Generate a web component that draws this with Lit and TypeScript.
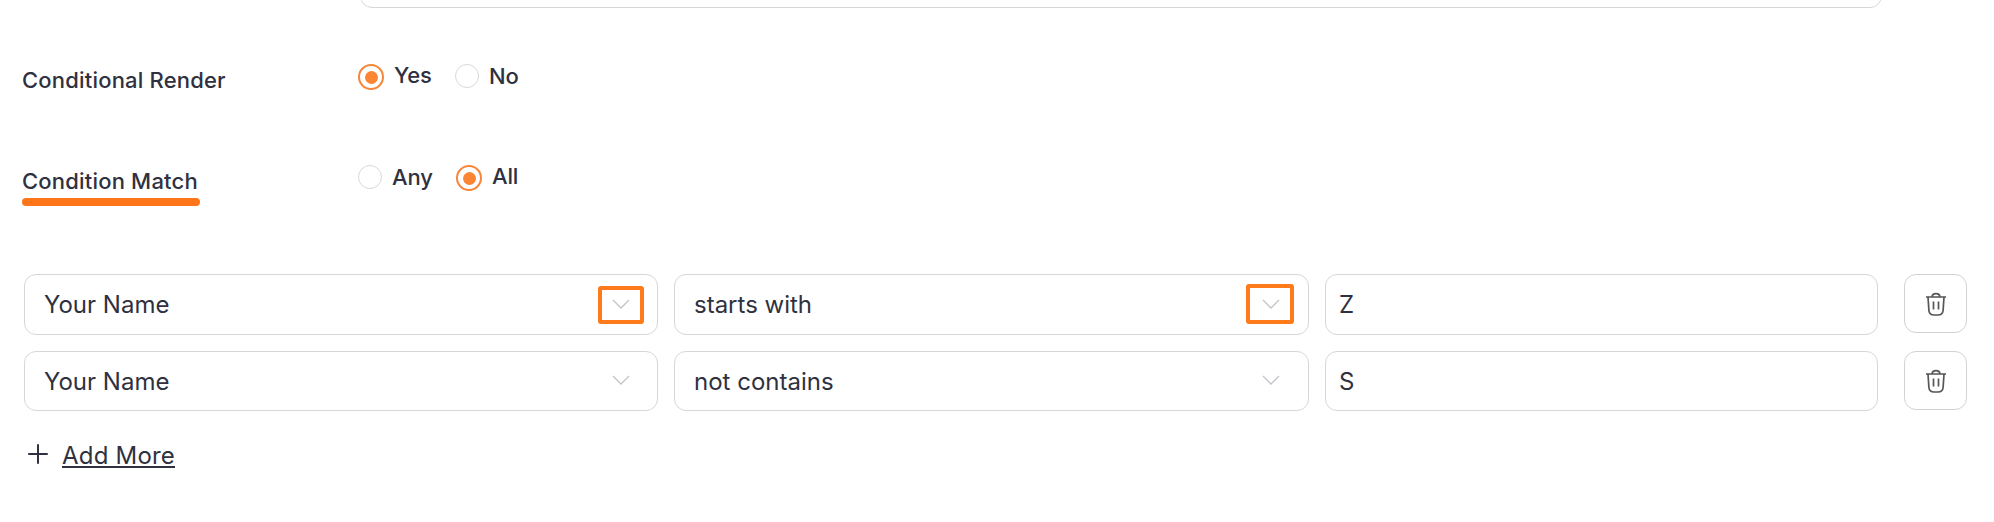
import { LitElement, html, css, svg } from "lit";
import { customElement, property } from "lit/decorators.js";

const chevron = svg`<path d="M1 1 L9 9 L17 1" fill="none" stroke="#c2c4c8" stroke-width="1.3"/>`;

@customElement("radio-option")
class RadioOption extends LitElement {
  @property() label = "";
  @property({ type: Boolean }) checked = false;

  static styles = css`
    :host { display: flex; align-items: flex-start; }
    .ring { box-sizing: border-box; width: 24px; height: 24px; border-radius: 50%; border: 1px solid #d8d8db; }
    .ring.on { width: 26px; height: 26px; border: 2px solid #f5863a; display: grid; place-items: center; }
    .dot { width: 13px; height: 13px; border-radius: 50%; background: #fb8532; }
    .text { margin-left: 10px; line-height: 26px; margin-top: -1px; letter-spacing: -0.15px; }
    .text.on { margin-top: -2px; }
  `;

  render() {
    const on = this.checked ? "on" : "";
    return html`<span class="ring ${on}">${this.checked ? html`<span class="dot"></span>` : ""}</span
      ><span class="text ${on}">${this.label}</span>`;
  }
}

@customElement("select-box")
class SelectBox extends LitElement {
  @property() value = "";
  @property() mark = "";

  static styles = css`
    :host { box-sizing: border-box; display: flex; align-items: center; justify-content: space-between; border: 1px solid #d6d7d9; border-radius: 12px; padding: 0 27px 0 19px; }
    .arrow { position: relative; width: 18px; height: 10px; margin-top: -2px; }
    svg { display: block; }
    .mark { position: absolute; box-sizing: border-box; border: 4px solid #ff7a1a; border-radius: 3px; }
    .first { left: -14px; top: -13px; width: 46px; height: 38px; }
    .second { left: -16px; top: -15px; width: 48px; height: 40px; }
  `;

  render() {
    return html`<span>${this.value}</span>
      <span class="arrow">
        <svg width="18" height="10" viewBox="0 0 18 10">${chevron}</svg>
        ${this.mark ? html`<span class="mark ${this.mark}"></span>` : ""}
      </span>`;
  }
}

@customElement("app-root")
class AppRoot extends LitElement {
  static styles = css`
    :host { display: block; box-sizing: border-box; height: 522px; overflow: hidden; background: #fff; color: #2f3140; font-family: Inter, "Liberation Sans", sans-serif; font-size: 22px; font-weight: 500; }
    .previous { box-sizing: border-box; height: 8px; margin-left: 360px; width: 1522px; overflow: hidden; display: flex; align-items: flex-end; }
    .previous-box { box-sizing: border-box; flex: 1; height: 60px; border: 1px solid #d6d7d9; border-radius: 12px; }
    .field { display: grid; grid-template-columns: 336px 97px auto; padding-left: 22px; justify-content: start; }
    .match { grid-template-columns: 336px 98px auto; }
    .render { padding-top: 56px; height: 45px; }
    .match { padding-top: 56px; height: 109px; }
    .label { padding-top: 3px; line-height: 26px; letter-spacing: 0.19px; }
    .underline { margin-top: 4px; width: 178px; height: 8px; border-radius: 4px; background: #ff7519; }
    .rows { display: grid; row-gap: 16px; padding-left: 24px; font-size: 24px; font-weight: 400; }
    .row { display: grid; grid-template-columns: 634px 635px 553px 63px; column-gap: 16px; }
    .operator { padding-right: 28px; }
    .tall { height: 61px; }
    .short { height: 60px; }
    .input { box-sizing: border-box; border: 1px solid #d6d7d9; border-radius: 12px; padding-left: 13px; display: flex; align-items: center; }
    .remove { box-sizing: border-box; width: 63px; height: 59px; margin-left: 10px; border: 1px solid #d2d2d3; border-radius: 12px; display: grid; place-items: center; }
    .add { display: flex; align-items: center; padding: 28px 0 0 28px; font-size: 24px; font-weight: 400; line-height: 32px; }
    .add svg { display: block; margin-top: -3px; }
    .more { margin-left: 14px; padding-top: 1px; letter-spacing: 0.2px; text-decoration: underline; text-decoration-thickness: 2px; text-underline-offset: 2px; text-decoration-skip-ink: none; }
  `;

  row(size: string, field: string, op: string, value: string, marked: boolean) {
    return html`<div class="row ${size}">
      <select-box value=${field} mark=${marked ? "first" : ""}></select-box>
      <select-box class="operator" value=${op} mark=${marked ? "second" : ""}></select-box>
      <div class="input">${value}</div>
      <div class="remove">
        <svg width="22" height="26" viewBox="0 0 22 26" fill="none" stroke="#55565a" stroke-width="1.7">
          <path d="M1 6 H21 M3 6 L3.9 19.5 Q4.4 24 9 24 H13 Q17.6 24 18.1 19.5 L19 6 M7 6 C7.4 1.5 14.6 1.5 15 6 M8.5 10.5 V18.5 M13.5 10.5 V18.5"/>
        </svg>
      </div>
    </div>`;
  }

  render() {
    return html`
      <div class="previous"><div class="previous-box"></div></div>
      <div class="field render">
        <div class="label">Conditional Render</div>
        <radio-option label="Yes" checked></radio-option>
        <radio-option label="No"></radio-option>
      </div>
      <div class="field match">
        <div class="label">Condition Match<div class="underline"></div></div>
        <radio-option label="Any"></radio-option>
        <radio-option label="All" checked></radio-option>
      </div>
      <div class="rows">
        ${this.row("tall", "Your Name", "starts with", "Z", true)}
        ${this.row("short", "Your Name", "not contains", "S", false)}
      </div>
      <div class="add">
        <svg width="20" height="20" viewBox="0 0 20 20" stroke="#2f3140" stroke-width="2" stroke-linecap="round"><path d="M1 10 H19 M10 1 V19"/></svg>
        <span class="more">Add More</span>
      </div>
    `;
  }
}
